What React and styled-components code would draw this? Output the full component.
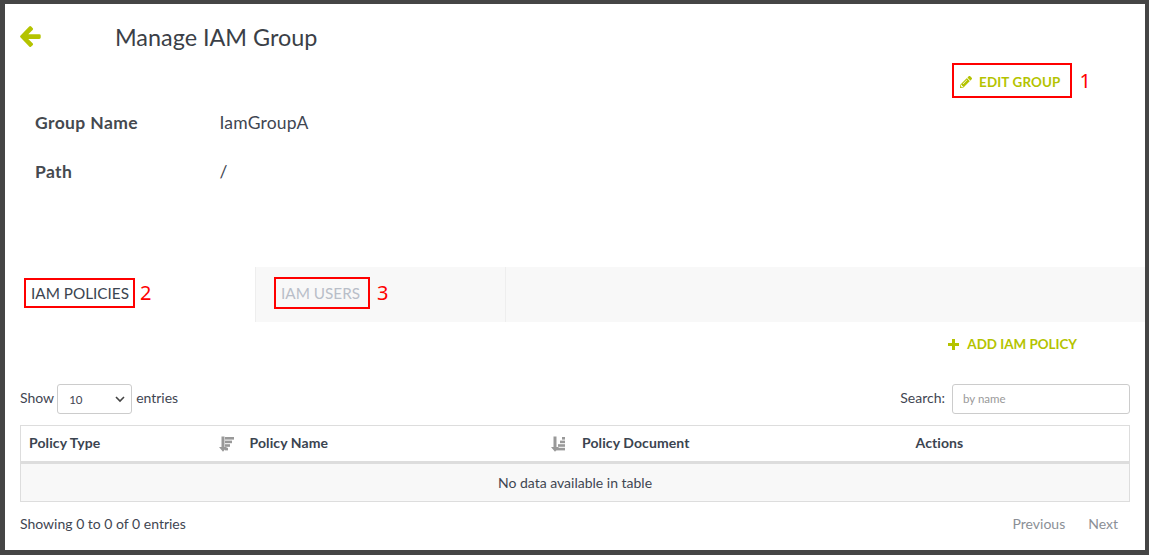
import React from 'react'
import styled, { createGlobalStyle } from 'styled-components'
import { FaPencilAlt } from 'react-icons/fa'

const LIME = '#b4c300'
const TEXT = '#3f4652'

const GlobalStyle = createGlobalStyle`
  * { box-sizing: border-box; }
  html, body { margin: 0; padding: 0; background: #fff; }
  body { font-family: Lato, "Liberation Sans", sans-serif; color: ${TEXT}; }
`

const Frame = styled.div`
  width: 1149px;
  height: 555px;
  overflow: hidden;
  border-style: solid;
  border-color: #454545;
  border-width: 4px 4px 5px 5px;
  background: #fff;
`

const Header = styled.header`
  display: flex;
  align-items: center;
  height: 40px;
  margin-top: 13px;
  padding-left: 15px;
`

const BackArrow = styled.svg`
  width: 21px;
  height: 21px;
  margin-top: -1px;
  fill: ${LIME};
`

const PlusIcon = styled.svg`
  width: 11px;
  height: 11px;
  fill: ${LIME};
`

const Title = styled.h1`
  margin: 0 0 0 74px;
  font-size: 23.4px;
  font-weight: 400;
  color: #3b3f47;
`

const ActionRow = styled.div`
  display: flex;
  align-items: center;
  justify-content: flex-end;
  padding-right: ${p => p.$right}px;
  margin-top: ${p => p.$top}px;
`

const Marked = styled.div`
  display: flex;
  align-items: center;
  border: 2px solid #f00;
  height: ${p => p.$h}px;
  padding: ${p => p.$pad};
`

const MarkNumber = styled.span`
  font-family: "Noto Sans", sans-serif;
  font-size: 20px;
  color: #f00;
  margin-left: ${p => p.$gap || 6}px;
  line-height: 1;
`

const LinkButton = styled.span`
  display: flex;
  align-items: center;
  gap: ${p => p.$gap}px;
  font-size: 13.4px;
  font-weight: 700;
  letter-spacing: ${p => p.$spacing || 0}px;
  color: ${LIME};
  white-space: nowrap;
`

const Details = styled.dl`
  display: grid;
  grid-template-columns: 184.5px 1fr;
  grid-auto-rows: 49px;
  margin: 0 0 0 30px;
  align-items: center;
  font-size: 17.5px;
`

const Term = styled.dt`
  font-weight: 700;
  letter-spacing: 0.4px;
  color: #45494f;
`

const Value = styled.dd`
  margin: 0;
  font-size: 17.5px;
  letter-spacing: 0.2px;
`

const Tabs = styled.nav`
  display: flex;
  height: 55px;
  margin-top: 71px;
  background: #f8f8f8;
`

const Tab = styled.div`
  display: flex;
  align-items: center;
  width: ${p => p.$active ? 250 : 251}px;
  padding: 0 0 3px ${p => p.$active ? 19 : 18}px;
  background: ${p => p.$active ? '#fff' : 'transparent'};
  border-right: ${p => p.$active ? 'none' : '1px solid #eee'};
  border-left: ${p => p.$active ? 'none' : '1px solid #eee'};
`

const TabLabel = styled.span`
  font-size: 15.3px;
  white-space: nowrap;
  color: ${p => p.$active ? '#3b4450' : '#b8bec8'};
`

const TableTools = styled.div`
  display: flex;
  align-items: center;
  justify-content: space-between;
  margin: 32px 15px 0 15px;
  height: 30px;
  font-size: 14px;
`

const ToolGroup = styled.label`
  display: flex;
  align-items: center;
  gap: ${p => p.$gap}px;
`

const ToolText = styled.span`
  padding-bottom: 3px;
`

const FakeSelect = styled.div`
  display: flex;
  align-items: center;
  justify-content: space-between;
  width: 75px;
  height: 30px;
  margin-right: 1px;
  padding: 0 5px 0 11px;
  border: 1px solid #ccc;
  border-radius: 3px;
  font-size: 11.5px;
`

const SearchBox = styled.input`
  width: 178px;
  height: 30px;
  padding: 0 10px 2px;
  border: 1px solid #ccc;
  border-radius: 3px;
  font-family: inherit;
  font-size: 11.5px;
  &::placeholder { color: #9a9a9a; opacity: 1; }
`

const Table = styled.table`
  width: 1110px;
  margin: 11px 0 0 15px;
  border-collapse: collapse;
  table-layout: fixed;
  border: 1px solid #ddd;
  font-size: 14px;
`

const HeadCell = styled.th`
  position: relative;
  height: 37px;
  padding: 0 0 2px 8px;
  text-align: left;
  font-weight: 700;
  letter-spacing: 0.1px;
  color: #3b4450;
  border-bottom: 3px solid #ddd;
  width: ${p => p.$w}px;
`

const SortIcon = styled.svg`
  position: absolute;
  right: 8px;
  top: 10px;
  width: 15px;
  height: 16px;
  fill: #999;
`

const EmptyCell = styled.td`
  height: 39px;
  padding-bottom: 2px;
  text-align: center;
  background: #f8f8f8;
`

const TableFooter = styled.div`
  display: flex;
  justify-content: space-between;
  align-items: center;
  margin: 13px 15px 0 15px;
  font-size: 14px;
`

const Pager = styled.div`
  display: flex;
  gap: 23px;
  padding-right: 12px;
  color: #8b8f96;
`

const SortGlyph = ({ flip }) => {
  const bars = flip ? [3, 5, 7, 9] : [9, 7, 5, 3]
  return (
    <SortIcon viewBox="0 0 15 16">
      <path d="M2.5 0.5h3v10.5h2.5L4 15.8 0 11h2.5z" />
      {bars.map((w, i) => <rect key={i} x={flip ? 15 - w - 1 : 6} y={1 + i * 3.6} width={w} height="2.6" />)}
    </SortIcon>
  )
}

export default function App() {
  return (
    <Frame>
      <GlobalStyle />
      <Header>
        <BackArrow viewBox="0 0 21 21">
          <path d="M9.2.6a1.4 1.4 0 0 1 2 0l1.4 1.4a1.4 1.4 0 0 1 0 2L8.3 8.2h11a1.4 1.4 0 0 1 1.4 1.4v2a1.4 1.4 0 0 1-1.4 1.4h-11l4.3 4.2a1.4 1.4 0 0 1 0 2l-1.4 1.4a1.4 1.4 0 0 1-2 0L.6 11.6a1.4 1.4 0 0 1 0-2z" />
        </BackArrow>
        <Title>Manage IAM Group</Title>
      </Header>

      <ActionRow $top={6} $right={54}>
        <Marked $h={35} $pad="2px 9px 0 6px">
          <LinkButton $gap={7} $spacing={0.15}><FaPencilAlt size={12} />EDIT GROUP</LinkButton>
        </Marked>
        <MarkNumber $gap={8}>1</MarkNumber>
      </ActionRow>

      <Details>
        <Term>Group Name</Term>
        <Value>IamGroupA</Value>
        <Term>Path</Term>
        <Value>/</Value>
      </Details>

      <Tabs>
        <Tab $active>
          <Marked $h={30} $pad="0 4px 0 5px">
            <TabLabel $active>IAM POLICIES</TabLabel>
          </Marked>
          <MarkNumber $gap={5}>2</MarkNumber>
        </Tab>
        <Tab>
          <Marked $h={32} $pad="0 8px 0 5px">
            <TabLabel>IAM USERS</TabLabel>
          </Marked>
          <MarkNumber $gap={7}>3</MarkNumber>
        </Tab>
      </Tabs>

      <ActionRow $top={14} $right={68}>
        <LinkButton $gap={8}>
          <PlusIcon viewBox="0 0 11 11"><path d="M4 0h3v4h4v3H7v4H4V7H0V4h4z" /></PlusIcon>
          ADD IAM POLICY
        </LinkButton>
      </ActionRow>

      <TableTools>
        <ToolGroup $gap={3}>
          <ToolText>Show</ToolText>
          <FakeSelect>
            10
            <svg width="12" height="8" viewBox="0 0 12 8"><path d="M2 2l4 4 4-4" fill="none" stroke="#444" strokeWidth="1.6" /></svg>
          </FakeSelect>
          <ToolText>entries</ToolText>
        </ToolGroup>
        <ToolGroup $gap={7}>
          <ToolText>Search:</ToolText>
          <SearchBox placeholder="by name" readOnly />
        </ToolGroup>
      </TableTools>

      <Table>
        <thead>
          <tr>
            <HeadCell $w={221}>Policy Type<SortGlyph /></HeadCell>
            <HeadCell $w={332.5}>Policy Name<SortGlyph flip /></HeadCell>
            <HeadCell $w={333.5}>Policy Document</HeadCell>
            <HeadCell>Actions</HeadCell>
          </tr>
        </thead>
        <tbody>
          <tr><EmptyCell colSpan={4}>No data available in table</EmptyCell></tr>
        </tbody>
      </Table>

      <TableFooter>
        <span>Showing 0 to 0 of 0 entries</span>
        <Pager><span>Previous</span><span>Next</span></Pager>
      </TableFooter>
    </Frame>
  )
}
